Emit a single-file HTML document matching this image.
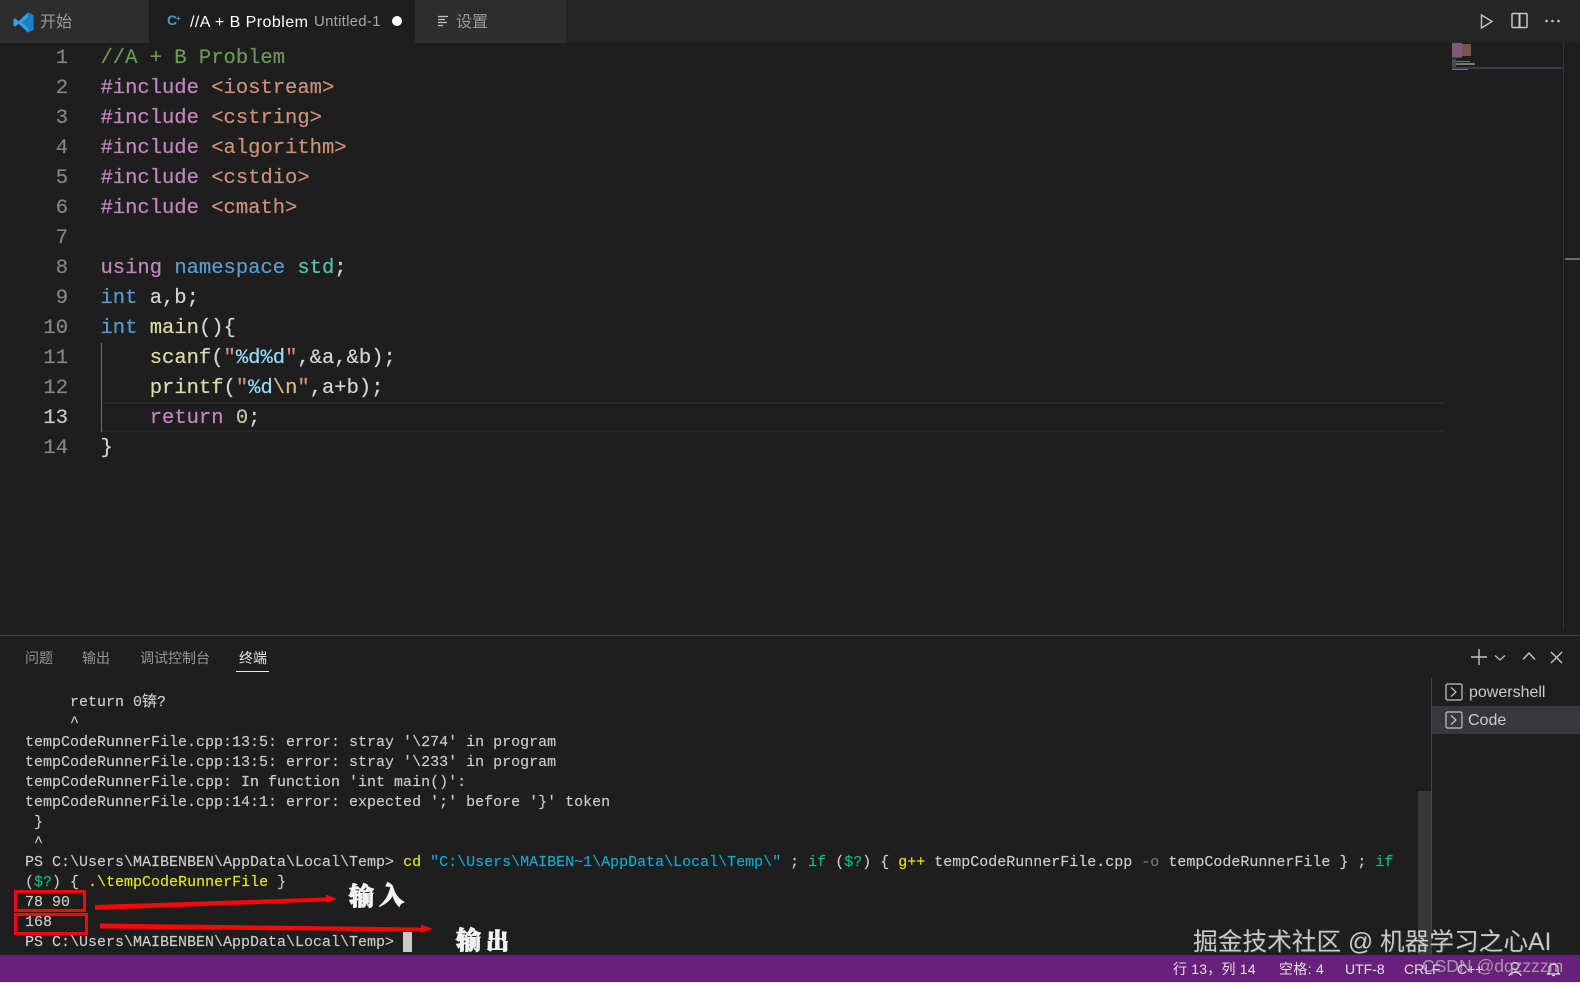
<!DOCTYPE html>
<html lang="zh"><head><meta charset="utf-8"><title>VS Code</title>
<style>
*{margin:0;padding:0;box-sizing:border-box}
html,body{width:1580px;height:983px;overflow:hidden;background:#1e1e1e}
body{position:relative;font-family:"Liberation Sans","Noto Sans CJK SC",sans-serif;color:#ccc}
.a{position:absolute;white-space:pre}
.ln,.c{position:absolute;font-family:"Liberation Mono","Noto Sans CJK SC",monospace;font-size:20.5px;line-height:30px;height:30px;white-space:pre;margin-top:1px;-webkit-text-stroke:.2px currentColor}
.ln{left:30px;width:38px;text-align:right;color:#858585}
.c{left:100.5px;color:#d4d4d4}
.t{position:absolute;left:25px;font-family:"Liberation Mono","Noto Sans CJK SC",monospace;font-size:15px;line-height:20px;height:20px;white-space:pre;color:#ccc;margin-top:1px;-webkit-text-stroke:.15px currentColor}
.k{color:#569cd6}.p{color:#c586c0}.s{color:#ce9178}.g{color:#6a9955}.e{color:#4ec9b0}.f{color:#dcdcaa}.v{color:#9cdcfe}.n{color:#b5cea8}.x{color:#d7ba7d}
.y{color:#e5e510}.cy{color:#11a8cd}.gr{color:#0dbc79}.dm{color:#767676}
.tab{position:absolute;top:0;height:43px}
.pt{position:absolute;top:649px;font-size:14px;line-height:18px;color:#969696}
.hw{position:absolute;font-family:"Noto Serif CJK SC",serif;font-weight:900;color:#f2f2f2;-webkit-text-stroke:1px #f2f2f2;line-height:1}
.sb{position:absolute;top:960px;font-size:14px;line-height:18px;color:#e6dcea;white-space:pre}
</style></head><body>

<!-- tab bar -->
<div class="a" style="left:0;top:0;width:1580px;height:43px;background:#252526"></div>
<div class="tab" style="left:0;width:149px;background:#2d2d2d"></div>
<div class="tab" style="left:149px;width:266px;background:#1e1e1e"></div>
<div class="tab" style="left:415px;width:151px;background:#2d2d2d"></div>

<svg class="a" style="left:13px;top:12px" width="21" height="21" viewBox="0 0 100 100">
<path d="M71 2 L98 15 V85 L71 98 L27 56 L10 70 L2 65 V35 L10 30 L27 44 Z M71 28 L43 50 L71 72 Z" fill="#2f9fe8" fill-rule="evenodd"/>
<path d="M71 2 L98 15 V85 L71 98 Z M71 28 V72 L43 50 Z" fill="#1b7fc9" fill-rule="evenodd"/>
</svg>
<div class="a" style="left:40px;top:13px;font-size:16px;line-height:20px;color:#9a9a9a">开始</div>

<div class="a" style="left:167px;top:12px;font-size:14px;line-height:16px;font-weight:bold;color:#519aba">C</div>
<div class="a" style="left:176px;top:14px;font-size:8px;line-height:10px;font-weight:bold;color:#519aba">+</div>
<div class="a" style="left:190px;top:13px;font-size:16px;line-height:20px;color:#fff;letter-spacing:.45px">//A + B Problem</div>
<div class="a" style="left:314px;top:13px;font-size:15px;line-height:18px;color:#a8a8a8;letter-spacing:.25px">Untitled-1</div>
<div class="a" style="left:392px;top:16px;width:10px;height:10px;border-radius:50%;background:#fff"></div>

<svg class="a" style="left:437px;top:15px" width="12" height="12" viewBox="0 0 12 12" stroke="#c5c5c5" stroke-width="1.2"><path d="M1 1.5H11M1 4.5H8M1 7.5H10M1 10.5H6"/></svg>
<div class="a" style="left:456px;top:13px;font-size:16px;line-height:20px;color:#9a9a9a">设置</div>

<svg class="a" style="left:1478px;top:13px" width="17" height="17" viewBox="0 0 17 17" fill="none" stroke="#c5c5c5" stroke-width="1.4"><path d="M3.5 2 L14 8.5 L3.5 15 Z"/></svg>
<svg class="a" style="left:1511px;top:12px" width="17" height="17" viewBox="0 0 17 17" fill="none" stroke="#c5c5c5" stroke-width="1.5"><rect x="1" y="1.5" width="15" height="14" rx="1"/><path d="M8.5 1.5V15.5" stroke-width="2"/></svg>
<svg class="a" style="left:1544px;top:17px" width="17" height="8" viewBox="0 0 17 8" fill="#c5c5c5"><circle cx="2.5" cy="4" r="1.3"/><circle cx="8.5" cy="4" r="1.3"/><circle cx="14.5" cy="4" r="1.3"/></svg>

<!-- minimap -->
<svg class="a" style="left:1450px;top:40px" width="120" height="35" viewBox="0 0 120 35">
<rect x="2" y="3" width="10" height="14" fill="#7d5a7a"/><rect x="12" y="4" width="9" height="12" fill="#7a5448"/>
<rect x="2" y="17" width="10" height="1" fill="#55445a"/>
<rect x="2" y="19" width="4" height="8" fill="#3e4e52"/><rect x="6" y="21" width="14" height="1" fill="#777"/><rect x="6" y="23" width="19" height="2" fill="#7a7a60"/>
<rect x="2" y="27" width="111" height="2" fill="#2f4252"/><rect x="2" y="29" width="16" height="1" fill="#777"/>
</svg>
<div class="a" style="left:1563px;top:43px;width:1px;height:587px;background:#333"></div>
<div class="a" style="left:1565px;top:258px;width:15px;height:2px;background:#6a6a6a"></div>

<!-- current line + guide -->
<div class="a" style="left:102px;top:402px;width:1343px;height:30px;border-top:2px solid #282828;border-bottom:2px solid #282828"></div>
<div class="a" style="left:101px;top:343px;width:1px;height:89px;background:#707070"></div>

<!-- editor -->
<div class="ln" style="top:43px">1</div><div class="c g" style="top:43px">//A + B Problem</div>
<div class="ln" style="top:73px">2</div><div class="c" style="top:73px"><span class="p">#include</span> <span class="s">&lt;iostream&gt;</span></div>
<div class="ln" style="top:103px">3</div><div class="c" style="top:103px"><span class="p">#include</span> <span class="s">&lt;cstring&gt;</span></div>
<div class="ln" style="top:133px">4</div><div class="c" style="top:133px"><span class="p">#include</span> <span class="s">&lt;algorithm&gt;</span></div>
<div class="ln" style="top:163px">5</div><div class="c" style="top:163px"><span class="p">#include</span> <span class="s">&lt;cstdio&gt;</span></div>
<div class="ln" style="top:193px">6</div><div class="c" style="top:193px"><span class="p">#include</span> <span class="s">&lt;cmath&gt;</span></div>
<div class="ln" style="top:223px">7</div>
<div class="ln" style="top:253px">8</div><div class="c" style="top:253px"><span class="p">using</span> <span class="k">namespace</span> <span class="e">std</span>;</div>
<div class="ln" style="top:283px">9</div><div class="c" style="top:283px"><span class="k">int</span> a,b;</div>
<div class="ln" style="top:313px">10</div><div class="c" style="top:313px"><span class="k">int</span> <span class="f">main</span>(){</div>
<div class="ln" style="top:343px">11</div><div class="c" style="top:343px">    <span class="f">scanf</span>(<span class="s">"</span><span class="v">%d%d</span><span class="s">"</span>,&amp;a,&amp;b);</div>
<div class="ln" style="top:373px">12</div><div class="c" style="top:373px">    <span class="f">printf</span>(<span class="s">"</span><span class="v">%d</span><span class="x">\n</span><span class="s">"</span>,a+b);</div>
<div class="ln" style="top:403px;color:#c6c6c6">13</div><div class="c" style="top:403px">    <span class="p">return</span> <span class="n">0</span>;</div>
<div class="ln" style="top:433px">14</div><div class="c" style="top:433px">}</div>

<!-- panel -->
<div class="a" style="left:0;top:635px;width:1580px;height:1px;background:#454545"></div>
<div class="pt" style="left:25px">问题</div>
<div class="pt" style="left:82px">输出</div>
<div class="pt" style="left:140px">调试控制台</div>
<div class="pt" style="left:239px;color:#e7e7e7">终端</div>
<div class="a" style="left:236px;top:671px;width:33px;height:1px;background:#e7e7e7"></div>

<svg class="a" style="left:1470px;top:648px" width="18" height="18" viewBox="0 0 18 18" stroke="#c5c5c5" stroke-width="1.4"><path d="M9 1V17M1 9H17"/></svg>
<svg class="a" style="left:1494px;top:654px" width="12" height="8" viewBox="0 0 12 8" fill="none" stroke="#c5c5c5" stroke-width="1.2"><path d="M1 1.5L6 6L11 1.5"/></svg>
<svg class="a" style="left:1522px;top:651px" width="14" height="10" viewBox="0 0 14 10" fill="none" stroke="#c5c5c5" stroke-width="1.4"><path d="M1 8.5L7 2L13 8.5"/></svg>
<svg class="a" style="left:1550px;top:651px" width="13" height="13" viewBox="0 0 13 13" fill="none" stroke="#c5c5c5" stroke-width="1.4"><path d="M1 1L12 12M12 1L1 12"/></svg>

<div class="a" style="left:1431px;top:678px;width:1px;height:277px;background:#454545"></div>
<div class="a" style="left:1432px;top:706px;width:148px;height:28px;background:#37373d"></div>
<svg class="a" style="left:1445px;top:683px" width="18" height="18" viewBox="0 0 18 18" fill="none" stroke="#c5c5c5" stroke-width="1.2"><rect x="1" y="1" width="16" height="16" rx="1.5"/><path d="M6 4.5L11 9L6 13.5"/></svg>
<div class="a" style="left:1469px;top:683px;font-size:16px;line-height:20px;color:#ccc">powershell</div>
<svg class="a" style="left:1445px;top:711px" width="18" height="18" viewBox="0 0 18 18" fill="none" stroke="#c5c5c5" stroke-width="1.2"><rect x="1" y="1" width="16" height="16" rx="1.5"/><path d="M6 4.5L11 9L6 13.5"/></svg>
<div class="a" style="left:1468px;top:711px;font-size:16px;line-height:20px;color:#ccc">Code</div>

<div class="a" style="left:1418px;top:791px;width:13px;height:164px;background:#383838"></div>

<!-- terminal -->
<div class="t" style="top:692px">     return 0锛?</div>
<div class="t" style="top:712px">     ^</div>
<div class="t" style="top:732px">tempCodeRunnerFile.cpp:13:5: error: stray '\274' in program</div>
<div class="t" style="top:752px">tempCodeRunnerFile.cpp:13:5: error: stray '\233' in program</div>
<div class="t" style="top:772px">tempCodeRunnerFile.cpp: In function 'int main()':</div>
<div class="t" style="top:792px">tempCodeRunnerFile.cpp:14:1: error: expected ';' before '}' token</div>
<div class="t" style="top:812px"> }</div>
<div class="t" style="top:832px"> ^</div>
<div class="t" style="top:852px">PS C:\Users\MAIBENBEN\AppData\Local\Temp&gt; <span class="y">cd</span> <span class="cy">"C:\Users\MAIBEN~1\AppData\Local\Temp\"</span> ; <span class="gr">if</span> (<span class="gr">$?</span>) { <span class="y">g++</span> tempCodeRunnerFile.cpp <span class="dm">-o</span> tempCodeRunnerFile } ; <span class="gr">if</span></div>
<div class="t" style="top:872px">(<span class="gr">$?</span>) { <span class="y">.\tempCodeRunnerFile</span> }</div>
<div class="t" style="top:892px">78 90</div>
<div class="t" style="top:912px">168</div>
<div class="t" style="top:932px">PS C:\Users\MAIBENBEN\AppData\Local\Temp&gt;</div>
<div class="a" style="left:403px;top:932px;width:9px;height:20px;background:#c8c8c8"></div>

<!-- annotations -->
<div class="a" style="left:14px;top:890px;width:72px;height:22px;border:3px solid #f40808"></div>
<div class="a" style="left:14px;top:913px;width:74px;height:22px;border:3px solid #f40808"></div>
<svg class="a" style="left:0;top:880px" width="460" height="70" viewBox="0 0 460 70" fill="#f40808">
<path d="M95 25 L326 17.5 L326 14.5 L337 19 L326 23 L326 21.5 L95 30 Z"/>
<path d="M100 43.5 L421 47.5 L421 44.5 L433 49 L421 53 L421 51.5 L100 48.5 Z"/>
</svg>
<div class="hw" style="left:349px;top:883px;font-size:25px">输</div>
<div class="hw" style="left:379px;top:882px;font-size:25px">入</div>
<div class="hw" style="left:456px;top:927px;font-size:25px">输</div>
<div class="hw" style="left:486px;top:928px;font-size:23px">出</div>

<!-- status bar -->
<div class="a" style="left:0;top:955px;width:1580px;height:27px;background:#68217a"></div>
<div class="a" style="left:0;top:982px;width:1580px;height:1px;background:#e8e8ee"></div>
<div class="sb" style="left:1173px;letter-spacing:.2px">行 13，列 14</div>
<div class="sb" style="left:1279px;letter-spacing:.3px">空格: 4</div>
<div class="sb" style="left:1345px">UTF-8</div>
<div class="sb" style="left:1404px">CRLF</div>
<div class="sb" style="left:1457px">C++</div>
<svg class="a" style="left:1507px;top:961px" width="16" height="16" viewBox="0 0 16 16" fill="none" stroke="#e6dcea" stroke-width="1.2"><circle cx="8" cy="5" r="3.5"/><path d="M2 15C3 10 13 10 14 15"/></svg>
<svg class="a" style="left:1546px;top:961px" width="15" height="16" viewBox="0 0 15 16" fill="none" stroke="#e6dcea" stroke-width="1.2"><path d="M3 12V7C3 2 12 2 12 7V12L14 13H1Z"/><path d="M6 14.5H9"/></svg>

<!-- watermarks -->
<div class="a" style="left:1193px;top:929px;font-size:24.7px;line-height:28px;color:#c9c9c9;text-shadow:1px 1px 1px #333">掘金技术社区 @ 机器学习之心AI</div>
<div class="a" style="left:1422px;top:954px;font-size:17.5px;line-height:24px;color:rgba(190,190,190,.75)">CSDN @dqzzzzm</div>
</body></html>
